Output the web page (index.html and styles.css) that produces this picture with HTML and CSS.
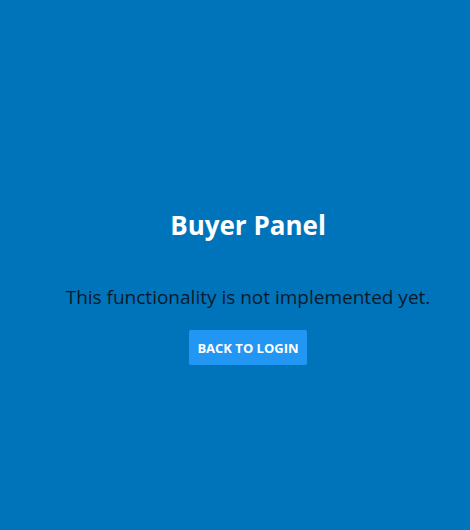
FILE: index.html
```html
<!DOCTYPE html>
<html>
<head>
<meta charset="utf-8">
<link rel="stylesheet" href="styles.css">
</head>
<body>
<main class="page">
  <div class="panel">
    <h1 class="title">Buyer Panel</h1>
    <p class="message">This functionality is not implemented yet.</p>
    <button class="btn">BACK TO LOGIN</button>
  </div>
</main>
</body>
</html>
```
FILE: styles.css
```css
html, body {
  margin: 0;
  padding: 0;
  height: 100%;
}
body {
  background: #0074bb;
  font-family: "Open Sans", "Noto Sans", sans-serif;
}
.page {
  height: 530px;
  display: flex;
  justify-content: center;
  align-items: flex-start;
  padding-left: 26px;
  box-sizing: border-box;
}
.panel {
  margin-top: 207px;
  display: flex;
  flex-direction: column;
  align-items: center;
}
.title {
  margin: 0;
  font-size: 26px;
  font-weight: 700;
  color: #ffffff;
  line-height: 36px;
}
.message {
  margin: 41px 0 0;
  font-size: 19px;
  color: #0a1a2a;
  line-height: 26px;
}
.btn {
  margin-top: 20px;
  background: #2196f3;
  color: #ffffff;
  border: none;
  border-radius: 2px;
  font-family: inherit;
  font-size: 13px;
  font-weight: 700;
  padding: 0 8px;
  height: 35px;
}
```
